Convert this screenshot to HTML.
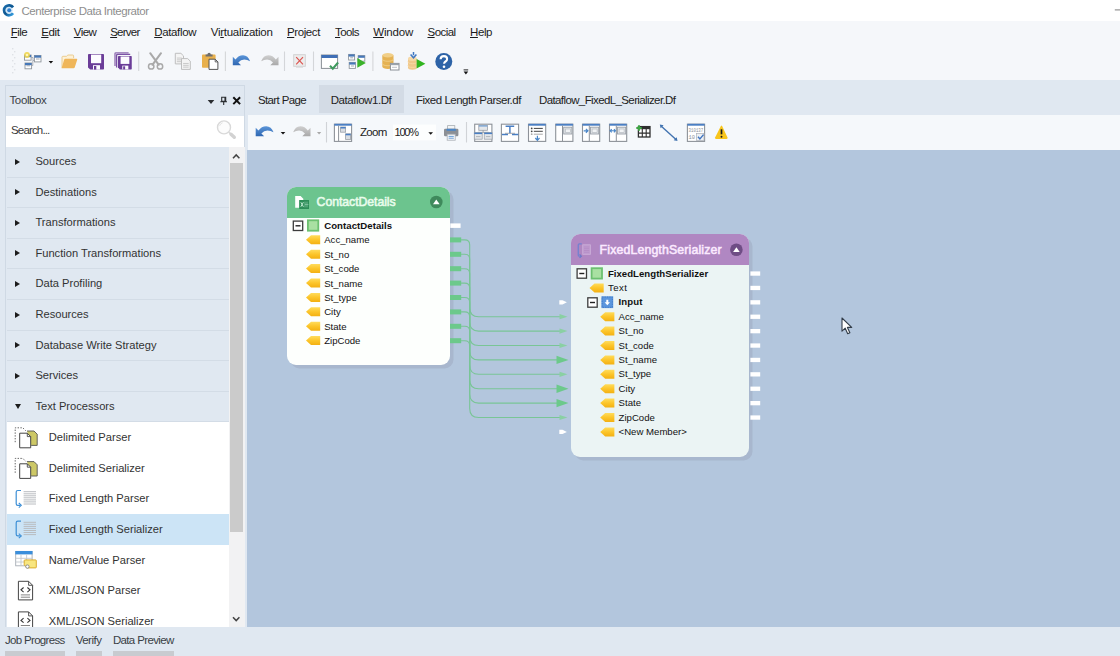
<!DOCTYPE html>
<html>
<head>
<meta charset="utf-8">
<title>Centerprise Data Integrator</title>
<style>
*{box-sizing:border-box;margin:0;padding:0}
html,body{width:1120px;height:656px;overflow:hidden}
body{position:relative;background:#e0e8f1;font-family:"Liberation Sans",sans-serif;font-size:12px;color:#222}
.abs{position:absolute}
.t{position:absolute;white-space:nowrap;line-height:1}
.t u{text-decoration:underline;text-underline-offset:1px;text-decoration-thickness:1px}
.t.hd{-webkit-text-stroke:0.55px currentColor}
#title{left:0;top:0;width:1120px;height:21px;background:#fff}
#menubar{left:0;top:21px;width:1120px;height:22px;background:#f5f7fa}
#toolbar{left:0;top:43px;width:1120px;height:36.5px;background:#f5f7fa}
#tbpanel{left:5px;top:85px;width:240px;height:543px;border:1px solid #cfd9e4;background:#e0e8f1}
#search{left:6px;top:116px;width:238px;height:31px;background:#fff}
#list{left:7px;top:147px;width:222px;height:480px;background:#e0e8f1;overflow:hidden}
.cat{position:absolute;left:0;width:222px;height:30.6px;border-bottom:1px solid #d3dce6}
.cat i{position:absolute;left:7.800px;top:11.700px;width:0;height:0;border-left:5px solid #1c1c1c;border-top:3.5px solid transparent;border-bottom:3.5px solid transparent}
.cat i.dn{left:7.600px;top:11.800px;border-left:3.5px solid transparent;border-right:3.5px solid transparent;border-top:5px solid #1c1c1c;border-bottom:none}
.item{position:absolute;left:0;width:222px;height:30.6px;background:#fff}
.item.sel{background:#cce4f6}
#sbar{left:229px;top:147px;width:15.5px;height:480px;background:#f2f2f3}
#thumb{left:230px;top:163px;width:12.5px;height:369px;background:#cbcbcb}
#tabact{left:319px;top:85px;width:85px;height:28px;background:#d3dbe5}
#doctb{left:248px;top:115px;width:872px;height:35px;background:#f5f8fb}
#canvas{left:247px;top:150px;width:873px;height:477px;background:#b3c6dd;overflow:hidden}
#status{left:0;top:627px;width:1120px;height:29px;background:#e0e8f1}
.stb{position:absolute;top:650.7px;height:6px;background:#c8cbd0}
.node{position:absolute;border-radius:9px;box-shadow:3.5px 3.5px 0.6px #a8b7ce}
.nh{position:absolute;left:0;top:0;width:100%;border-radius:9px 9px 0 0}
svg{position:absolute;overflow:visible}
</style>
</head>
<body>
<div id="title" class="abs"></div>
<div id="menubar" class="abs"></div>
<div id="toolbar" class="abs"></div>
<div id="tbpanel" class="abs"></div>
<div id="search" class="abs"></div>
<div id="list" class="abs">
<div class="cat" style="top:0.0px"><i></i></div>
<div class="cat" style="top:30.6px"><i></i></div>
<div class="cat" style="top:61.2px"><i></i></div>
<div class="cat" style="top:91.8px"><i></i></div>
<div class="cat" style="top:122.4px"><i></i></div>
<div class="cat" style="top:153.0px"><i></i></div>
<div class="cat" style="top:183.6px"><i></i></div>
<div class="cat" style="top:214.2px"><i></i></div>
<div class="cat" style="top:244.8px"><i class="dn"></i></div>
<div class="item" style="top:275.4px"></div>
<div class="item" style="top:306.0px"></div>
<div class="item" style="top:336.6px"></div>
<div class="item sel" style="top:367.2px"></div>
<div class="item" style="top:397.8px"></div>
<div class="item" style="top:428.4px"></div>
<div class="item" style="top:459.0px"></div>
</div>
<div id="sbar" class="abs"></div>
<div id="thumb" class="abs"></div>
<div id="tabact" class="abs"></div>
<div id="doctb" class="abs"></div>
<div id="canvas" class="abs"></div>
<div id="status" class="abs"></div>
<div class="stb" style="left:5px;width:60px"></div>
<div class="stb" style="left:75.7px;width:26px"></div>
<div class="stb" style="left:112.9px;width:61px"></div>
<div class="node" style="left:286.5px;top:187px;width:163.5px;height:177.5px;background:#fdfffd"><div class="nh" style="height:31px;background:#6cc48e"></div></div>
<div class="node" style="left:570.5px;top:234.3px;width:178.800px;height:223.2px;background:#ebf4f4"><div class="nh" style="height:31.200px;background:#b087c2"></div></div>
<svg style="left:0;top:0" width="1120" height="656" viewBox="0 0 1120 656">
<defs><linearGradient id="tg" x1="0" y1="0" x2="0" y2="1"><stop offset="0" stop-color="#ffdc5c"/><stop offset="0.5" stop-color="#fcc52a"/><stop offset="1" stop-color="#f3b012"/></linearGradient></defs>
<rect x="293.3" y="221.1" width="9.4" height="9.4" fill="#fff" stroke="#3c3c3c" stroke-width="1.300"/><path d="M295.5 225.8h5" stroke="#222" stroke-width="1.400"/>
<rect x="307.9" y="220.3" width="10.4" height="10.4" fill="#a9e0a2" stroke="#6cc070" stroke-width="1.8"/>
<path d="M306.0 239.8 L311.0 235.3 H320.2 V244.3 H311.0 Z" fill="url(#tg)"/>
<path d="M306.0 254.2 L311.0 249.7 H320.2 V258.7 H311.0 Z" fill="url(#tg)"/>
<path d="M306.0 268.6 L311.0 264.1 H320.2 V273.1 H311.0 Z" fill="url(#tg)"/>
<path d="M306.0 283.0 L311.0 278.5 H320.2 V287.5 H311.0 Z" fill="url(#tg)"/>
<path d="M306.0 297.4 L311.0 292.9 H320.2 V301.9 H311.0 Z" fill="url(#tg)"/>
<path d="M306.0 311.8 L311.0 307.3 H320.2 V316.3 H311.0 Z" fill="url(#tg)"/>
<path d="M306.0 326.2 L311.0 321.7 H320.2 V330.7 H311.0 Z" fill="url(#tg)"/>
<path d="M306.0 340.6 L311.0 336.1 H320.2 V345.1 H311.0 Z" fill="url(#tg)"/>
<g><path d="M295.200 196h5.400l2.700 2.700v2H299.600v7.100H295.200z" fill="#fff"/><rect x="299.200" y="200" width="9.800" height="9" fill="#2d8d58"/><path d="M300.800 202.200l2.600 4.600M303.400 202.200l-2.600 4.600" stroke="#bfe8d0" stroke-width="1"/><path d="M305 201.600v5.800M307 201.600v5.800M305 204.500h3.400" stroke="#8ccbaa" stroke-width="0.700"/></g>
<circle cx="436.3" cy="202.0" r="6.3" fill="#3f8a5c"/><path d="M433.0 204.2l3.300 -4.800l3.300 4.800z" fill="#fff"/>
<circle cx="736.4" cy="249.8" r="6.3" fill="#6f4d85"/><path d="M733.1 252.0l3.300 -4.800l3.300 4.800z" fill="#fff"/>
<rect x="450.3" y="223.4" width="10.3" height="4.5" fill="#fff"/>
<rect x="450" y="237.4" width="11.2" height="5" fill="#6cc98b"/>
<rect x="450" y="251.8" width="11.2" height="5" fill="#6cc98b"/>
<rect x="450" y="266.2" width="11.2" height="5" fill="#6cc98b"/>
<rect x="450" y="280.6" width="11.2" height="5" fill="#6cc98b"/>
<rect x="450" y="295.0" width="11.2" height="5" fill="#6cc98b"/>
<rect x="450" y="309.4" width="11.2" height="5" fill="#6cc98b"/>
<rect x="450" y="323.8" width="11.2" height="5" fill="#6cc98b"/>
<rect x="450" y="338.2" width="11.2" height="5" fill="#6cc98b"/>
<rect x="577.1" y="268.8" width="9.4" height="9.4" fill="#fff" stroke="#3c3c3c" stroke-width="1.300"/><path d="M579.3 273.5h5" stroke="#222" stroke-width="1.400"/>
<rect x="591.6" y="268.2" width="10.4" height="10.4" fill="#a9e0a2" stroke="#6cc070" stroke-width="1.8"/>
<path d="M589.5 287.9 L594.5 283.4 H603.7 V292.4 H594.5 Z" fill="url(#tg)"/>
<rect x="587.8" y="297.8" width="9.4" height="9.4" fill="#fff" stroke="#3c3c3c" stroke-width="1.300"/><path d="M590.0 302.5h5" stroke="#222" stroke-width="1.400"/>
<g transform="translate(601.4,296.3)"><rect x="0" y="0" width="11.8" height="11.8" fill="#5b96dd"/><rect x="0.8" y="0.8" width="10.2" height="10.2" fill="none" stroke="#3f78c4" stroke-width="0.900" stroke-dasharray="1.200 1.200"/><path d="M4.900 3.400h2v2.600h1.700L5.900 9 3.200 6h1.700z" fill="#fff"/></g>
<path d="M600.2 316.7 L605.2 312.2 H614.4 V321.2 H605.2 Z" fill="url(#tg)"/>
<path d="M600.2 331.1 L605.2 326.6 H614.4 V335.6 H605.2 Z" fill="url(#tg)"/>
<path d="M600.2 345.5 L605.2 341.0 H614.4 V350.0 H605.2 Z" fill="url(#tg)"/>
<path d="M600.2 359.9 L605.2 355.4 H614.4 V364.4 H605.2 Z" fill="url(#tg)"/>
<path d="M600.2 374.3 L605.2 369.8 H614.4 V378.8 H605.2 Z" fill="url(#tg)"/>
<path d="M600.2 388.7 L605.2 384.2 H614.4 V393.2 H605.2 Z" fill="url(#tg)"/>
<path d="M600.2 403.1 L605.2 398.6 H614.4 V407.6 H605.2 Z" fill="url(#tg)"/>
<path d="M600.2 417.5 L605.2 413.0 H614.4 V422.0 H605.2 Z" fill="url(#tg)"/>
<path d="M600.2 431.9 L605.2 427.4 H614.4 V436.4 H605.2 Z" fill="url(#tg)"/>
<rect x="750.4" y="271.4" width="9.8" height="4.3" fill="#fff"/>
<rect x="750.4" y="285.8" width="9.8" height="4.3" fill="#fff"/>
<rect x="750.4" y="300.2" width="9.8" height="4.3" fill="#fff"/>
<rect x="750.4" y="314.6" width="9.8" height="4.3" fill="#fff"/>
<rect x="750.4" y="329.0" width="9.8" height="4.3" fill="#fff"/>
<rect x="750.4" y="343.4" width="9.8" height="4.3" fill="#fff"/>
<rect x="750.4" y="357.8" width="9.8" height="4.3" fill="#fff"/>
<rect x="750.4" y="372.2" width="9.8" height="4.3" fill="#fff"/>
<rect x="750.4" y="386.6" width="9.8" height="4.3" fill="#fff"/>
<rect x="750.4" y="401.0" width="9.8" height="4.3" fill="#fff"/>
<rect x="750.4" y="415.4" width="9.8" height="4.3" fill="#fff"/>
<path d="M559.3 300.2h3.2l4.4 2.1l-4.4 2.1h-3.2z" fill="#fff"/>
<path d="M559.3 429.8h3.2l4.4 2.1l-4.4 2.1h-3.2z" fill="#fff"/>
<g transform="translate(577.400,243) scale(0.880)" opacity="0.700"><path d="M5 1H2.2Q1 1 1 2.2V13.8Q1 15 2.2 15H4" fill="none" stroke="#5a7fd6" stroke-width="1.500"/><path d="M2.500 13l2 2-2 2" fill="none" stroke="#4a74cc" stroke-width="1.300"/><rect x="6" y="2" width="9" height="11" fill="#c7a6d6" stroke="#d9c2e4" stroke-width="0.8"/><path d="M7.5 4.5h6M7.5 6.5h6M7.5 8.5h6M7.5 10.5h6" stroke="#b48cc6" stroke-width="0.9"/></g>
<path d="M461 239.9H464.7Q469.7 239.9 469.7 244.9V307.7Q469.7 316.7 478.7 316.7H560" fill="none" stroke="#79c596" stroke-width="1.100"/>
<path d="M559.500 314.1L567.500 316.7L559.500 319.3z" fill="#8ad0a3"/>
<path d="M461 254.3H464.7Q469.7 254.3 469.7 259.3V322.1Q469.7 331.1 478.7 331.1H560" fill="none" stroke="#79c596" stroke-width="1.100"/>
<path d="M559.500 328.5L567.500 331.1L559.500 333.7z" fill="#8ad0a3"/>
<path d="M461 268.7H464.7Q469.7 268.7 469.7 273.7V336.5Q469.7 345.5 478.7 345.5H560" fill="none" stroke="#79c596" stroke-width="1.100"/>
<path d="M559.500 342.9L567.500 345.5L559.500 348.1z" fill="#8ad0a3"/>
<path d="M461 283.1H464.7Q469.7 283.1 469.7 288.1V350.9Q469.7 359.9 478.7 359.9H560" fill="none" stroke="#79c596" stroke-width="1.100"/>
<path d="M556.5 355.7L568.5 359.9L556.5 364.1z" fill="#6cc98b"/>
<path d="M461 297.5H464.7Q469.7 297.5 469.7 302.5V365.3Q469.7 374.3 478.7 374.3H560" fill="none" stroke="#79c596" stroke-width="1.100"/>
<path d="M559.500 371.7L567.500 374.3L559.500 376.9z" fill="#8ad0a3"/>
<path d="M461 311.9H464.7Q469.7 311.9 469.7 316.9V379.7Q469.7 388.7 478.7 388.7H560" fill="none" stroke="#79c596" stroke-width="1.100"/>
<path d="M556.5 384.5L568.5 388.7L556.5 392.9z" fill="#6cc98b"/>
<path d="M461 326.3H464.7Q469.7 326.3 469.7 331.3V394.1Q469.7 403.1 478.7 403.1H560" fill="none" stroke="#79c596" stroke-width="1.100"/>
<path d="M556.5 398.9L568.5 403.1L556.5 407.3z" fill="#6cc98b"/>
<path d="M461 340.7H464.7Q469.7 340.7 469.7 345.7V408.5Q469.7 417.5 478.7 417.5H560" fill="none" stroke="#79c596" stroke-width="1.100"/>
<path d="M559.500 414.9L567.500 417.5L559.500 420.1z" fill="#8ad0a3"/>
</svg>
<svg style="left:841px;top:317px" width="14" height="20" viewBox="0 0 14 20"><path d="M1 1v13.2l3.2-3 2.5 5.6 2.2-1-2.5-5.4h4.3z" fill="#fff" stroke="#333d49" stroke-width="1.1" stroke-linejoin="round"/></svg>
<svg style="left:0;top:0" width="1120" height="656" viewBox="0 0 1120 656">
<defs><linearGradient id="blu" x1="0" y1="0" x2="0" y2="1"><stop offset="0" stop-color="#5b95d8"/><stop offset="1" stop-color="#2f67b2"/></linearGradient><linearGradient id="gry" x1="0" y1="0" x2="0" y2="1"><stop offset="0" stop-color="#cfcfcf"/><stop offset="1" stop-color="#a9a9a9"/></linearGradient><linearGradient id="gold" x1="0" y1="0" x2="1" y2="0"><stop offset="0" stop-color="#f4d08a"/><stop offset="1" stop-color="#e3ad4c"/></linearGradient></defs>
<defs><linearGradient id="cg" x1="0" y1="0" x2="1" y2="1"><stop offset="0" stop-color="#1b6fae"/><stop offset="0.5" stop-color="#0d558f"/><stop offset="1" stop-color="#3aa4e6"/></linearGradient></defs>
<circle cx="9" cy="10.300" r="3.600" fill="#cfe6f8"/>
<path d="M13.100 7.400A5 5 0 1 0 13.100 13.200" fill="none" stroke="url(#cg)" stroke-width="2.700"/>
<circle cx="9.200" cy="10.200" r="2" fill="#2f80cf"/>
<path d="M1114.800 9.900h6" stroke="#8a8a8a" stroke-width="1.100"/>
<rect x="12.0" y="48.0" width="1.4" height="1.4" fill="#dfe2e6"/>
<rect x="14.0" y="51.0" width="1.4" height="1.4" fill="#dfe2e6"/>
<rect x="12.0" y="54.0" width="1.4" height="1.4" fill="#dfe2e6"/>
<rect x="14.0" y="57.0" width="1.4" height="1.4" fill="#dfe2e6"/>
<rect x="12.0" y="60.0" width="1.4" height="1.4" fill="#dfe2e6"/>
<rect x="14.0" y="63.0" width="1.4" height="1.4" fill="#dfe2e6"/>
<rect x="12.0" y="66.0" width="1.4" height="1.4" fill="#dfe2e6"/>
<rect x="14.0" y="69.0" width="1.4" height="1.4" fill="#dfe2e6"/>
<rect x="12.0" y="72.0" width="1.4" height="1.4" fill="#dfe2e6"/>
<rect x="24.50" y="55.00" width="6.60" height="5.20" fill="#fff" stroke="#8f959c" stroke-width="0.90"/>
<rect x="24.50" y="55.00" width="6.60" height="2.20" fill="#4678b8"/>
<rect x="34.40" y="55.50" width="6.60" height="6.40" fill="#fff" stroke="#8f959c" stroke-width="0.90"/>
<rect x="34.40" y="55.50" width="6.60" height="2.20" fill="#4678b8"/>
<rect x="25.00" y="63.00" width="6.60" height="5.80" fill="#fff" stroke="#8f959c" stroke-width="0.90"/>
<rect x="25.00" y="63.00" width="6.60" height="2.20" fill="#4678b8"/>
<path d="M26.5 65.8h3.6M36 59h3.6" stroke="#9aa0a8" stroke-width="0.9"/>
<path d="M31.2 57.5h1.8v3h1.6M31.8 65.5h1v-5" fill="none" stroke="#9aa0a8" stroke-width="0.8"/>
<circle cx="27" cy="55" r="2.900" fill="#f1d54a" opacity="0.900"/><circle cx="27" cy="55" r="1.300" fill="#fff6b8"/>
<path d="M48.6 60.9h4.6l-2.3 2.7z" fill="#111"/>
<path d="M62 67.8V57.2q0-.9.9-.9h3.6l1.4-1.3h4.8q.9 0 .9.9v2.2" fill="#fdf1d6" stroke="#e9c889" stroke-width="0.9"/>
<path d="M61.6 68.2l2.6-8.6q.3-.8 1.1-.8h11.3q.9 0 .6.9l-2.5 7.7q-.3.8-1.100.8z" fill="#efb65a"/>
<g transform="translate(88.00,54.00) scale(1.000)"><path d="M0 0.8Q0 0 .8 0H15.2Q16 0 16 .8V14.8Q16 15.6 15.2 15.6H2.200L0 13.400z" fill="#6b3d98"/><rect x="3" y="0.600" width="10.2" height="8.600" fill="#fdfcff"/><rect x="5" y="11.200" width="7" height="4.4" fill="#fdfcff"/><rect x="6" y="12" width="2.300" height="3.600" fill="#6b3d98"/></g>
<path d="M115 66V53.600Q115 52.800 115.800 52.800H128.600" fill="none" stroke="#8e6cb0" stroke-width="1.3"/>
<path d="M116.600 67.600V55.200Q116.600 54.400 117.400 54.400H130.200" fill="none" stroke="#7c53a6" stroke-width="1.3"/>
<g transform="translate(118.00,56.00) scale(0.860)"><path d="M0 0.8Q0 0 .8 0H15.2Q16 0 16 .8V14.8Q16 15.6 15.2 15.6H2.200L0 13.400z" fill="#6b3d98"/><rect x="3" y="0.600" width="10.2" height="8.600" fill="#fdfcff"/><rect x="5" y="11.200" width="7" height="4.4" fill="#fdfcff"/><rect x="6" y="12" width="2.300" height="3.600" fill="#6b3d98"/></g>
<path d="M138.7 51.500V71" stroke="#d4d6d9" stroke-width="1.1"/>
<path d="M225.4 51.500V71" stroke="#d4d6d9" stroke-width="1.1"/>
<path d="M284.5 51.500V71" stroke="#d4d6d9" stroke-width="1.1"/>
<path d="M313.5 51.500V71" stroke="#d4d6d9" stroke-width="1.1"/>
<path d="M372.9 51.500V71" stroke="#d4d6d9" stroke-width="1.1"/>
<g fill="none" stroke="#a9a9a9" stroke-linecap="round"><path d="M150.200 53.200L158.800 64.800M161 53.200L152.400 64.800" stroke-width="2"/><circle cx="151.200" cy="66.400" r="2.700" stroke-width="1.500"/><circle cx="160" cy="66.400" r="2.700" stroke-width="1.500"/></g>
<path d="M175.30 53.30h5.60l2.60 2.60v8.00h-8.20z" fill="#f4f4f4" stroke="#b9b9b9" stroke-width="0.90"/>
<path d="M176.90 58.07h5.00" stroke="#c4c4c4" stroke-width="0.9"/>
<path d="M176.90 59.87h5.00" stroke="#c4c4c4" stroke-width="0.9"/>
<path d="M176.90 61.67h5.00" stroke="#c4c4c4" stroke-width="0.9"/>
<path d="M181.50 58.60h6.20l2.60 2.60v8.20h-8.80z" fill="#f4f4f4" stroke="#b9b9b9" stroke-width="0.90"/>
<path d="M183.10 63.46h5.60" stroke="#c4c4c4" stroke-width="0.9"/>
<path d="M183.10 65.30h5.60" stroke="#c4c4c4" stroke-width="0.9"/>
<path d="M183.10 67.13h5.60" stroke="#c4c4c4" stroke-width="0.9"/>
<rect x="202" y="54.600" width="13.600" height="13.200" rx="0.800" fill="#e8b04c"/>
<path d="M205.600 56.400v-1.800h1.800q0-1.900 1.700-1.900t1.700 1.900h1.800v1.800z" fill="#6e6e6e"/>
<path d="M209 59.200h6.200l2.700 2.700v7.500H209z" fill="#fff" stroke="#555" stroke-width="1"/><path d="M215.200 59.200v2.700h2.700" fill="none" stroke="#555" stroke-width="0.900"/>
<path d="M0 1.600V10.100H8.200L5.500 7.400Q8 4.300 11.400 4.300Q14.600 4.300 17.300 6Q15.200 0 10.200 0Q5.600 0 2.700 4.300z" fill="url(#blu)" transform="translate(232.80,55.20)"/>
<path d="M0 1.600V10.100H8.200L5.500 7.400Q8 4.300 11.400 4.300Q14.600 4.300 17.300 6Q15.200 0 10.200 0Q5.600 0 2.700 4.300z" fill="url(#gry)" transform="translate(278.50,55.20) scale(-1,1)"/>
<rect x="293.700" y="54.700" width="11.600" height="11.600" fill="#ececec" stroke="#cfcfcf" stroke-width="0.900"/><path d="M296.200 57.200l6.800 7.200M303 57.200l-6.800 7.200" stroke="#dc5550" stroke-width="1.200"/><path d="M296 67.300h7" stroke="#dadada" stroke-width="0.900"/>
<rect x="321.40" y="55.00" width="16.20" height="13.40" fill="#fff" stroke="#8a8f96" stroke-width="1.00"/>
<rect x="321.40" y="55.00" width="16.20" height="3.00" fill="#3f6fb6"/>
<path d="M330 65.800l2.800 2.900l5.300-6.200" fill="none" stroke="#3f9a5e" stroke-width="2"/>
<rect x="348.60" y="54.40" width="6.00" height="5.60" fill="#fff" stroke="#8f959c" stroke-width="0.90"/>
<rect x="348.60" y="54.40" width="6.00" height="2.20" fill="#4678b8"/>
<rect x="358.20" y="55.60" width="6.60" height="5.60" fill="#fff" stroke="#8f959c" stroke-width="0.90"/>
<rect x="358.20" y="55.60" width="6.60" height="2.20" fill="#4678b8"/>
<rect x="349.20" y="62.40" width="6.20" height="6.00" fill="#fff" stroke="#8f959c" stroke-width="0.90"/>
<rect x="349.20" y="62.40" width="6.20" height="2.20" fill="#4678b8"/>
<path d="M350.200 57.800h3M351 66h3" stroke="#9aa0a8" stroke-width="0.900"/>
<path d="M357.300 58v9.800l8.500-4.900z" fill="#3bb22a"/>
<path d="M382.30 55.20v11.60a5.60 2.20 0 0 0 11.20 0v-11.60z" fill="#e5b253"/>
<ellipse cx="387.90" cy="55.20" rx="5.60" ry="2.20" fill="#f1cf88"/>
<path d="M382.30 59.08a5.60 2.20 0 0 0 11.20 0" fill="none" stroke="#f1cf88" stroke-width="0.900"/>
<path d="M382.30 63.56a5.60 2.20 0 0 0 11.20 0" fill="none" stroke="#f1cf88" stroke-width="0.900"/>
<rect x="390.400" y="63.400" width="8.600" height="6.600" fill="#fff" stroke="#8a8f96" stroke-width="1"/><rect x="390.400" y="63.400" width="8.600" height="1.800" fill="#9aa3ad"/><path d="M392 67.300h5" stroke="#b5bac0" stroke-width="0.900"/>
<path d="M408.00 58.70v8.80a4.40 2.20 0 0 0 8.80 0v-8.80z" fill="#f0c88c"/>
<ellipse cx="412.40" cy="58.70" rx="4.40" ry="2.20" fill="#f6d9a8"/>
<path d="M408.00 61.52a4.40 2.20 0 0 0 8.80 0" fill="none" stroke="#f6d9a8" stroke-width="0.900"/>
<path d="M408.00 65.21a4.40 2.20 0 0 0 8.80 0" fill="none" stroke="#f6d9a8" stroke-width="0.900"/>
<path d="M413.500 52v3.200M410.600 54.600l2.900 3.200l2.900-3.200" fill="none" stroke="#3f78c2" stroke-width="1.500"/>
<path d="M416.600 59v9.400l8.800-4.700z" fill="#31b41f"/>
<circle cx="443.800" cy="61.500" r="8.500" fill="#2d63a7"/>
<path d="M440.600 59.300q0-3.200 3.300-3.200q3.200 0 3.200 2.800q0 1.600-1.600 2.600q-1.400.900-1.400 2.200" fill="none" stroke="#fff" stroke-width="2.100"/><circle cx="444" cy="66.700" r="1.300" fill="#fff"/>
<path d="M463.600 69.900h4.600" stroke="#222" stroke-width="1"/><path d="M463.600 71.600h4.600l-2.300 3z" fill="#111"/>
<path d="M207.700 100h6.600l-3.300 3.900z" fill="#2a2d31"/>
<g stroke="#2a2d31" fill="none" stroke-width="1.100"><path d="M221.700 97.200h4v4.200h-4zM225 97.200v4.200" /><path d="M220.300 101.700h6.700M223.700 101.700v3.300"/></g>
<path d="M233.300 97.300l6.800 6.800M240.100 97.300l-6.800 6.800" stroke="#111" stroke-width="2"/>
<circle cx="224" cy="127.400" r="6.500" fill="#fcfcfc" stroke="#d9d9d9" stroke-width="1.400"/><path d="M219.600 125.800a4.600 4.600 0 0 1 3-3" fill="none" stroke="#e4e4e4" stroke-width="1"/><path d="M228.800 132.200l2.200 2" stroke="#dadada" stroke-width="1.600"/><path d="M231 134.200l3.300 3.100" stroke="#d2d2d2" stroke-width="3.400" stroke-linecap="round"/>
<path d="M233 158.300l3.200-3.400l3.200 3.400" fill="none" stroke="#444" stroke-width="1.500"/>
<path d="M233 617.200l3.200 3.400l3.200-3.400" fill="none" stroke="#444" stroke-width="1.500"/>
<g transform="translate(255.700,126.200) scale(1.030,1)">
<path d="M0 1.600V10.100H8.200L5.500 7.400Q8 4.300 11.400 4.300Q14.600 4.300 17.300 6Q15.200 0 10.200 0Q5.600 0 2.700 4.300z" fill="url(#blu)" transform="translate(0.00,0.00)"/>
</g>
<g transform="translate(293.200,126.200) scale(1.000,1)">
<path d="M0 1.600V10.100H8.200L5.500 7.400Q8 4.300 11.400 4.300Q14.600 4.300 17.300 6Q15.200 0 10.200 0Q5.600 0 2.700 4.300z" fill="url(#gry)" transform="translate(17.30,0.00) scale(-1,1)"/>
</g>
<path d="M280.700 132.100h4.600l-2.300 2.500z" fill="#111"/>
<path d="M317 132.100h4.200l-2.100 2.400z" fill="#a8a8a8"/>
<path d="M326.5 122V142.500" stroke="#d0d3d7" stroke-width="1.100"/>
<path d="M466.5 122V142.500" stroke="#d0d3d7" stroke-width="1.100"/>
<rect x="334.40" y="124.20" width="17.200" height="17.200" fill="#fff" stroke="#8d9299" stroke-width="1.100"/>
<rect x="334.40" y="123.80" width="17.200" height="1.900" fill="#4a7fc4"/>
<path d="M338.600 125.500v15.600" stroke="#8d9299" stroke-width="1"/>
<rect x="340.600" y="127" width="5" height="5.200" fill="#d9dde2" stroke="#9aa0a8" stroke-width="0.800"/><rect x="340.600" y="127" width="5" height="1.500" fill="#4a7fc4"/>
<rect x="345.600" y="133.800" width="5" height="5.600" fill="#d9dde2" stroke="#9aa0a8" stroke-width="0.800"/><rect x="345.600" y="133.800" width="5" height="1.500" fill="#4a7fc4"/>
<rect x="393" y="124.600" width="43" height="15.700" fill="#fdfefe"/>
<path d="M428.400 132.200h4.600l-2.300 2.500z" fill="#111"/>
<rect x="447.600" y="125.600" width="7.200" height="3.600" fill="#f2f4f6" stroke="#a9aeb4" stroke-width="0.800"/>
<rect x="444" y="128.800" width="14.400" height="7.400" rx="1.200" fill="#8b8f95"/><rect x="446.600" y="128.800" width="9.200" height="2" fill="#4a86c8"/>
<rect x="447.200" y="134.200" width="8" height="6" fill="#f6f8fa" stroke="#a9aeb4" stroke-width="0.800"/><path d="M448.600 136.400h5.200M448.600 138.200h5.200" stroke="#5b93d0" stroke-width="0.900"/>
<rect x="474.70" y="124.20" width="17.200" height="17.200" fill="#fff" stroke="#8d9299" stroke-width="1.100"/>
<rect x="478.800" y="125.300" width="8.600" height="5" fill="#e4e7ea" stroke="#9aa0a8" stroke-width="0.800"/><rect x="478.800" y="125.300" width="8.600" height="1.300" fill="#7aa5d8"/>
<path d="M483.100 130.300v2M477.800 132.300h10.800" stroke="#8d9299" stroke-width="0.800"/>
<rect x="474.3" y="132.600" width="7.900" height="6.600" fill="#e4e7ea" stroke="#9aa0a8" stroke-width="0.800"/><rect x="474.3" y="132.600" width="7.900" height="1.500" fill="#4a7fc4"/><path d="M476.0 136.600h4.500" stroke="#a4a9af" stroke-width="0.800"/>
<rect x="484.2" y="132.600" width="7.900" height="6.600" fill="#e4e7ea" stroke="#9aa0a8" stroke-width="0.800"/><rect x="484.2" y="132.600" width="7.900" height="1.500" fill="#4a7fc4"/><path d="M485.9 136.600h4.500" stroke="#a4a9af" stroke-width="0.800"/>
<rect x="501.40" y="124.20" width="17.200" height="17.200" fill="#fff" stroke="#8d9299" stroke-width="1.100"/>
<path d="M505.600 126.300h8.600M509.900 126.300v7M502 134.600h6M512 134.600h6.300" stroke="#4a7fc4" stroke-width="1.500"/><path d="M505 133.300h10" stroke="#8d9299" stroke-width="0.800"/>
<rect x="528.50" y="124.20" width="17.200" height="17.200" fill="#fff" stroke="#8d9299" stroke-width="1.100"/>
<rect x="528.50" y="123.80" width="17.200" height="1.900" fill="#4a7fc4"/>
<circle cx="531.700" cy="128.4" r="0.900" fill="#444"/><path d="M533.800 128.4h9" stroke="#444" stroke-width="1"/>
<circle cx="531.700" cy="131.3" r="0.900" fill="#444"/><path d="M533.800 131.3h9" stroke="#444" stroke-width="1"/>
<circle cx="531.700" cy="134.2" r="0.900" fill="#aaa"/><path d="M533.800 134.2h9" stroke="#aaa" stroke-width="1"/>
<path d="M537.400 135.800v4M535.300 138l2.100 2.300l2.100-2.300" fill="none" stroke="#4a86c8" stroke-width="1.200"/>
<rect x="555.70" y="124.20" width="17.200" height="17.200" fill="#fff" stroke="#8d9299" stroke-width="1.100"/>
<rect x="555.70" y="123.80" width="17.200" height="1.900" fill="#4a7fc4"/>
<path d="M562.5 125.500v15.600" stroke="#8d9299" stroke-width="1"/>
<rect x="563.7" y="127.200" width="8.200" height="6.800" fill="#e3e6e9" stroke="#9aa0a8" stroke-width="0.900"/><rect x="565.3" y="129" width="5" height="3.400" fill="#f1f3f5" stroke="#b0b5bb" stroke-width="0.600"/>
<rect x="582.50" y="124.20" width="17.200" height="17.200" fill="#fff" stroke="#8d9299" stroke-width="1.100"/>
<rect x="582.50" y="123.80" width="17.200" height="1.900" fill="#4a7fc4"/>
<path d="M589.3 125.500v15.600" stroke="#8d9299" stroke-width="1"/>
<rect x="590.5" y="127.200" width="8.200" height="6.800" fill="#e3e6e9" stroke="#9aa0a8" stroke-width="0.900"/><rect x="592.1" y="129" width="5" height="3.400" fill="#f1f3f5" stroke="#b0b5bb" stroke-width="0.600"/>
<path d="M583.7 130.800h4M585.9 128.900l2 1.900l-2 1.900" fill="none" stroke="#4a86c8" stroke-width="1.200"/>
<rect x="609.50" y="124.20" width="17.200" height="17.200" fill="#fff" stroke="#8d9299" stroke-width="1.100"/>
<rect x="609.50" y="123.80" width="17.200" height="1.900" fill="#4a7fc4"/>
<path d="M616.3 125.500v15.600" stroke="#8d9299" stroke-width="1"/>
<rect x="617.5" y="127.200" width="8.200" height="6.800" fill="#e3e6e9" stroke="#9aa0a8" stroke-width="0.900"/><rect x="619.1" y="129" width="5" height="3.400" fill="#f1f3f5" stroke="#b0b5bb" stroke-width="0.600"/>
<path d="M610.3 130.800h5M611.7 129.200l-1.600 1.600l1.600 1.600M613.9 129.200l1.600 1.600l-1.600 1.600" fill="none" stroke="#4a86c8" stroke-width="1.100"/>
<rect x="638.400" y="126.600" width="11.600" height="10.400" fill="#fff" stroke="#2f2f2f" stroke-width="1.300"/><rect x="638.400" y="126.600" width="11.600" height="2.600" fill="#2f2f2f"/>
<path d="M638.400 133.100h11.600M642.300 129v8M646.200 129v8" stroke="#2f2f2f" stroke-width="1.100"/>
<path d="M636.300 128h5.400M639 125.300v5.400" stroke="#3ea544" stroke-width="1.900"/>
<path d="M661.600 126.400L676 139.400" stroke="#4173b0" stroke-width="1.400"/><path d="M659.800 124.500l3.800.700l-3 3zM677.500 141l-3.800-.700l3-3z" fill="#4173b0"/>
<rect x="687.40" y="124.20" width="17.200" height="17.200" fill="#fff" stroke="#8d9299" stroke-width="1.100"/>
<rect x="687.40" y="123.80" width="17.200" height="1.900" fill="#4a7fc4"/>
<text x="688.600" y="132" font-family="Liberation Mono" font-size="5.400" fill="#8a8f96" textLength="14.600" lengthAdjust="spacingAndGlyphs">310137</text>
<text x="688.600" y="138.800" font-family="Liberation Mono" font-size="5.400" fill="#8a8f96">10</text>
<rect x="696.600" y="133.600" width="7.400" height="6.800" fill="#eef1f4" stroke="#aab0b7" stroke-width="0.700"/><path d="M698 136.800l1.900 2.200l3.600-4.400" fill="none" stroke="#3f74c0" stroke-width="1.400"/>
<path d="M720.900 125.900q.6-.900 1.200 0l5.400 11.700q.4 1.300-.900 1.300h-10.600q-1.300 0-.900-1.300z" fill="#f8c51c"/><path d="M721.500 129.300v5" stroke="#1a1a1a" stroke-width="1.700"/><circle cx="721.500" cy="136.700" r="0.950" fill="#1a1a1a"/>
<clipPath id="lc"><rect x="7" y="147" width="222" height="480"/></clipPath><g clip-path="url(#lc)">
<path d="M15.200 442.2v-14.400h7.600l3 3" fill="none" stroke="#555" stroke-width="0.900" stroke-dasharray="1.400 1.400"/>
<path d="M27 431.0h7l3.200 3.200v11.200h-6" fill="#cdc866" stroke="#555" stroke-width="0.900"/>
<path d="M19.700 433.2h7.600l3.400 3.400v11.200h-11z" fill="#fff" stroke="#444" stroke-width="1"/><path d="M27.300 433.2v3.400h3.400" fill="none" stroke="#444" stroke-width="0.900"/>
<path d="M15.200 472.8v-14.400h7.600l3 3" fill="none" stroke="#555" stroke-width="0.900" stroke-dasharray="1.400 1.400"/>
<path d="M27 461.6h7l3.200 3.200v11.200h-6" fill="#cdc866" stroke="#555" stroke-width="0.900"/>
<path d="M19.700 463.8h7.600l3.400 3.400v11.200h-11z" fill="#fff" stroke="#444" stroke-width="1"/><path d="M27.300 463.8v3.400h3.400" fill="none" stroke="#444" stroke-width="0.900"/>
<path d="M21 490.5h-3.200q-1.600 0-1.600 1.600v11.600q0 1.600 1.600 1.600h2.600" fill="none" stroke="#3d8fd6" stroke-width="1.200"/><path d="M18.800 503.0l2.500 2.300l-2.500 2.300" fill="none" stroke="#3d8fd6" stroke-width="1.100"/>
<path d="M23.600 491.7h12.400" stroke="#b9bcc0" stroke-width="1"/>
<path d="M23.600 493.8h12.400" stroke="#b9bcc0" stroke-width="1"/>
<path d="M23.600 495.8h12.400" stroke="#b9bcc0" stroke-width="1"/>
<path d="M23.600 497.8h12.400" stroke="#b9bcc0" stroke-width="1"/>
<path d="M23.600 499.9h12.400" stroke="#b9bcc0" stroke-width="1"/>
<path d="M23.600 501.9h12.400" stroke="#b9bcc0" stroke-width="1"/>
<path d="M23.600 504.0h12.400" stroke="#b9bcc0" stroke-width="1"/>
<path d="M21 521.1h-3.200q-1.600 0-1.600 1.600v11.600q0 1.600 1.600 1.600h2.600" fill="none" stroke="#3d8fd6" stroke-width="1.200"/><path d="M18.800 533.6l2.500 2.300l-2.500 2.300" fill="none" stroke="#3d8fd6" stroke-width="1.100"/>
<path d="M23.600 522.3h12.400" stroke="#b9bcc0" stroke-width="1"/>
<path d="M23.600 524.3h12.400" stroke="#b9bcc0" stroke-width="1"/>
<path d="M23.600 526.4h12.400" stroke="#b9bcc0" stroke-width="1"/>
<path d="M23.600 528.4h12.400" stroke="#b9bcc0" stroke-width="1"/>
<path d="M23.600 530.5h12.400" stroke="#b9bcc0" stroke-width="1"/>
<path d="M23.600 532.5h12.400" stroke="#b9bcc0" stroke-width="1"/>
<path d="M23.600 534.6h12.400" stroke="#b9bcc0" stroke-width="1"/>
<rect x="15.700" y="551.400" width="16.400" height="14.400" fill="#fff" stroke="#a7adb5" stroke-width="0.900"/><rect x="15.300" y="551" width="17.200" height="3.400" fill="#3a8edb"/>
<path d="M15.700 558.300h16.400M15.700 562h16.400M21 554.400v11.400M26.600 554.400v11.400" stroke="#c3c8ce" stroke-width="0.900"/>
<path d="M24.200 560.600q0-.700.700-.700h10.700q.700 0 .700.700v6.600q0 .700-.700.700h-8.400l-3-3z" fill="#f8e680" stroke="#d7a520" stroke-width="0.900"/><circle cx="27.400" cy="566.600" r="1.700" fill="#fff" stroke="#8d8d8d" stroke-width="1"/>
<path d="M18.400 581.3h10.200l4 4v14.600h-14.200z" fill="#fff" stroke="#444" stroke-width="1"/><path d="M28.600 581.3v4h4" fill="none" stroke="#444" stroke-width="0.900"/>
<path d="M23.600 587.5l-2.600 2.300l2.600 2.300M27.400 587.5l2.600 2.300l-2.600 2.300" fill="none" stroke="#333" stroke-width="1.100"/>
<path d="M20.800 594.9h9.200M20.800 597.2h9.200" stroke="#777" stroke-width="0.900"/>
<path d="M18.400 611.9h10.200l4 4v14.600h-14.200z" fill="#fff" stroke="#444" stroke-width="1"/><path d="M28.600 611.9v4h4" fill="none" stroke="#444" stroke-width="0.900"/>
<path d="M23.600 618.1l-2.600 2.300l2.600 2.300M27.400 618.1l2.600 2.300l-2.600 2.300" fill="none" stroke="#333" stroke-width="1.100"/>
<path d="M20.800 625.5h9.200M20.800 627.8h9.200" stroke="#777" stroke-width="0.900"/>
</g>
</svg>
<div class="t " style="left:21.4px;top:5.8px;font-size:11.5px;color:#8e8e8e;letter-spacing:-0.45px;">Centerprise Data Integrator</div>
<div class="t " style="left:10.8px;top:26.5px;font-size:11.5px;color:#1b1b1b;letter-spacing:-0.58px;"><u>F</u>ile</div>
<div class="t " style="left:41.2px;top:26.5px;font-size:11.5px;color:#1b1b1b;letter-spacing:-0.38px;"><u>E</u>dit</div>
<div class="t " style="left:73.8px;top:26.5px;font-size:11.5px;color:#1b1b1b;letter-spacing:-0.58px;"><u>V</u>iew</div>
<div class="t " style="left:110.2px;top:26.5px;font-size:11.5px;color:#1b1b1b;letter-spacing:-0.76px;"><u>S</u>erver</div>
<div class="t " style="left:154.2px;top:26.5px;font-size:11.5px;color:#1b1b1b;letter-spacing:-0.34px;"><u>D</u>ataflow</div>
<div class="t " style="left:210.8px;top:26.5px;font-size:11.5px;color:#1b1b1b;letter-spacing:-0.28px;">Vi<u>r</u>tualization</div>
<div class="t " style="left:287.0px;top:26.5px;font-size:11.5px;color:#1b1b1b;letter-spacing:-0.4px;"><u>P</u>roject</div>
<div class="t " style="left:335.0px;top:26.5px;font-size:11.5px;color:#1b1b1b;letter-spacing:-0.57px;"><u>T</u>ools</div>
<div class="t " style="left:373.2px;top:26.5px;font-size:11.5px;color:#1b1b1b;letter-spacing:-0.18px;"><u>W</u>indow</div>
<div class="t " style="left:427.5px;top:26.5px;font-size:11.5px;color:#1b1b1b;letter-spacing:-0.55px;"><u>S</u>ocial</div>
<div class="t " style="left:470.0px;top:26.5px;font-size:11.5px;color:#1b1b1b;letter-spacing:-0.41px;"><u>H</u>elp</div>
<div class="t " style="left:9.5px;top:94.7px;font-size:11.5px;color:#3a3f45;letter-spacing:-0.38px;">Toolbox</div>
<div class="t " style="left:11.0px;top:125.2px;font-size:11.5px;color:#3a3a3a;letter-spacing:-0.84px;">Search...</div>
<div class="t " style="left:258.0px;top:94.8px;font-size:11.5px;color:#222;letter-spacing:-0.63px;">Start Page</div>
<div class="t " style="left:330.7px;top:94.8px;font-size:11.5px;color:#222;letter-spacing:-0.43px;">Dataflow1.Df</div>
<div class="t " style="left:416.0px;top:94.8px;font-size:11.5px;color:#222;letter-spacing:-0.49px;">Fixed Length Parser.df</div>
<div class="t " style="left:539.0px;top:94.8px;font-size:11.5px;color:#222;letter-spacing:-0.61px;">Dataflow_FixedL_Serializer.Df</div>
<div class="t " style="left:360.0px;top:127.2px;font-size:11.5px;color:#222;letter-spacing:-0.65px;">Zoom</div>
<div class="t " style="left:394.6px;top:127.4px;font-size:11px;color:#222;letter-spacing:-1.24px;">100%</div>
<div class="t " style="left:5.0px;top:634.8px;font-size:11.5px;color:#3a3f45;letter-spacing:-0.68px;">Job Progress</div>
<div class="t " style="left:75.7px;top:634.8px;font-size:11.5px;color:#3a3f45;letter-spacing:-0.51px;">Verify</div>
<div class="t " style="left:112.9px;top:634.8px;font-size:11.5px;color:#3a3f45;letter-spacing:-0.64px;">Data Preview</div>
<div class="t " style="left:35.4px;top:156.0px;font-size:11.15px;color:#333;">Sources</div>
<div class="t " style="left:35.4px;top:186.6px;font-size:11.15px;color:#333;">Destinations</div>
<div class="t " style="left:35.4px;top:217.2px;font-size:11.15px;color:#333;">Transformations</div>
<div class="t " style="left:35.4px;top:247.8px;font-size:11.15px;color:#333;">Function Transformations</div>
<div class="t " style="left:35.4px;top:278.4px;font-size:11.15px;color:#333;">Data Profiling</div>
<div class="t " style="left:35.4px;top:309.0px;font-size:11.15px;color:#333;">Resources</div>
<div class="t " style="left:35.4px;top:339.6px;font-size:11.15px;color:#333;">Database Write Strategy</div>
<div class="t " style="left:35.4px;top:370.2px;font-size:11.15px;color:#333;">Services</div>
<div class="t " style="left:35.4px;top:400.8px;font-size:11.15px;color:#333;">Text Processors</div>
<div class="t " style="left:48.8px;top:432.1px;font-size:11.15px;color:#333;">Delimited Parser</div>
<div class="t " style="left:48.8px;top:462.7px;font-size:11.15px;color:#333;">Delimited Serializer</div>
<div class="t " style="left:48.8px;top:493.3px;font-size:11.15px;color:#333;">Fixed Length Parser</div>
<div class="t " style="left:48.8px;top:523.9px;font-size:11.15px;color:#333;">Fixed Length Serializer</div>
<div class="t " style="left:48.8px;top:554.5px;font-size:11.15px;color:#333;">Name/Value Parser</div>
<div class="t " style="left:48.8px;top:585.1px;font-size:11.15px;color:#333;">XML/JSON Parser</div>
<div class="t " style="left:48.8px;top:615.7px;font-size:11.15px;color:#333;">XML/JSON Serializer</div>
<div class="t hd" style="left:316.6px;top:196.2px;font-size:12.3px;color:#e9fcec;letter-spacing:-0.07px;">ContactDetails</div>
<div class="t " style="left:324.2px;top:220.9px;font-size:9.6px;color:#111;letter-spacing:0.06px;font-weight:bold;">ContactDetails</div>
<div class="t " style="left:324.2px;top:235.3px;font-size:9.6px;color:#111;">Acc_name</div>
<div class="t " style="left:324.2px;top:249.7px;font-size:9.6px;color:#111;">St_no</div>
<div class="t " style="left:324.2px;top:264.1px;font-size:9.6px;color:#111;">St_code</div>
<div class="t " style="left:324.2px;top:278.5px;font-size:9.6px;color:#111;">St_name</div>
<div class="t " style="left:324.2px;top:292.9px;font-size:9.6px;color:#111;">St_type</div>
<div class="t " style="left:324.2px;top:307.3px;font-size:9.6px;color:#111;">City</div>
<div class="t " style="left:324.2px;top:321.7px;font-size:9.6px;color:#111;">State</div>
<div class="t " style="left:324.2px;top:336.1px;font-size:9.6px;color:#111;">ZipCode</div>
<div class="t hd" style="left:599.6px;top:243.9px;font-size:12.3px;color:#fbeaff;letter-spacing:0.15px;">FixedLengthSerializer</div>
<div class="t " style="left:607.9px;top:268.6px;font-size:9.6px;color:#111;letter-spacing:0.03px;font-weight:bold;">FixedLengthSerializer</div>
<div class="t " style="left:607.9px;top:283.0px;font-size:9.6px;color:#111;letter-spacing:0.5px;">Text</div>
<div class="t " style="left:618.6px;top:297.4px;font-size:9.6px;color:#111;letter-spacing:0.11px;font-weight:bold;">Input</div>
<div class="t " style="left:618.6px;top:311.8px;font-size:9.6px;color:#111;">Acc_name</div>
<div class="t " style="left:618.6px;top:326.2px;font-size:9.6px;color:#111;">St_no</div>
<div class="t " style="left:618.6px;top:340.6px;font-size:9.6px;color:#111;">St_code</div>
<div class="t " style="left:618.6px;top:355.0px;font-size:9.6px;color:#111;">St_name</div>
<div class="t " style="left:618.6px;top:369.4px;font-size:9.6px;color:#111;">St_type</div>
<div class="t " style="left:618.6px;top:383.8px;font-size:9.6px;color:#111;">City</div>
<div class="t " style="left:618.6px;top:398.2px;font-size:9.6px;color:#111;">State</div>
<div class="t " style="left:618.6px;top:412.6px;font-size:9.6px;color:#111;">ZipCode</div>
<div class="t " style="left:618.6px;top:427.0px;font-size:9.6px;color:#111;">&lt;New Member&gt;</div>

</body>
</html>
